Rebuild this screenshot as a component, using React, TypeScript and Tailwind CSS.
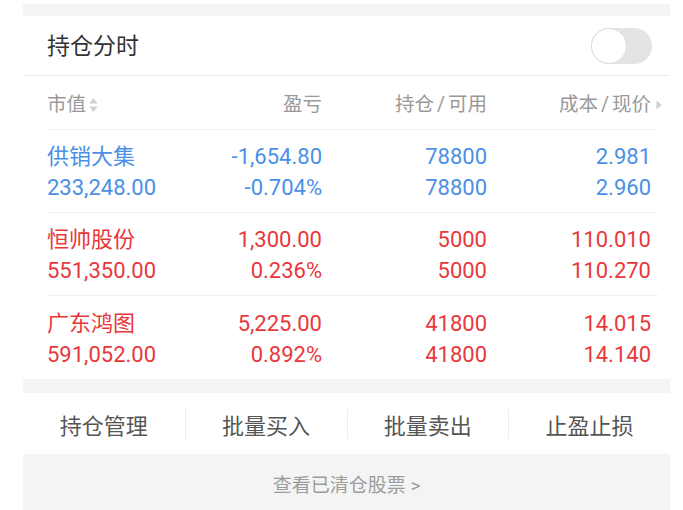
const rows = [
  { name: '供销大集', value: '233,248.00', pl: '-1,654.80', pct: '-0.704%', hold: '78800', avail: '78800', cost: '2.981', price: '2.960', up: false },
  { name: '恒帅股份', value: '551,350.00', pl: '1,300.00', pct: '0.236%', hold: '5000', avail: '5000', cost: '110.010', price: '110.270', up: true },
  { name: '广东鸿图', value: '591,052.00', pl: '5,225.00', pct: '0.892%', hold: '41800', avail: '41800', cost: '14.015', price: '14.140', up: true },
]

const actions = ['持仓管理', '批量买入', '批量卖出', '止盈止损']

function SortIcon() {
  return (
    <svg width="9" height="16" viewBox="0 0 9 16" className="ml-[3px]">
      <path d="M4.5 1 L8.5 6.5 L0.5 6.5 Z" fill="#cfcfcf" />
      <path d="M4.5 15 L8.5 9.5 L0.5 9.5 Z" fill="#cfcfcf" />
    </svg>
  )
}

export default function App() {
  return (
    <div className="min-h-[510px] bg-white pt-1 font-['Roboto','Noto_Sans_CJK_SC',sans-serif]">
      <div className="ml-[23px] w-[647px] bg-[#f4f4f4]">
        <div className="h-3" />
        <div className="bg-white">
          {/* title */}
          <div className="flex h-[60px] items-center justify-between border-b border-[#ececec] pl-6 pr-[18px]">
            <span className="pt-[3px] text-[23px] text-[#333]">持仓分时</span>
            <div className="relative h-9 w-[61px] rounded-full bg-[#e4e4e4]">
              <div className="absolute left-0 top-0 h-9 w-9 rounded-full border border-[#dcdcdc] bg-white" />
            </div>
          </div>

          {/* column heads */}
          <div className="ml-6 mr-3 flex h-[54px] items-center border-b border-[#f0f0f0] pr-[7px] pt-[5px] text-[19.5px] text-[#999]">
            <div className="flex w-[130px] items-center">
              市值
              <SortIcon />
            </div>
            <div className="w-[145px] text-right">盈亏</div>
            <div className="w-[165px] text-right">
              持仓<span className="px-[3px]">/</span>可用
            </div>
            <div className="relative w-[164px] text-right">
              成本<span className="px-[3px]">/</span>现价
              <svg width="6" height="10" viewBox="0 0 6 10" className="absolute -right-[11px] top-[10px]">
                <path d="M0.5 0.5 L5.5 5 L0.5 9.5 Z" fill="#cfcfcf" />
              </svg>
            </div>
          </div>

          {/* rows */}
          {rows.map((r, i) => (
            <div
              key={r.name}
              className={`ml-6 mr-3 flex h-[83px] flex-col justify-center pr-[7px] pt-[2px] text-[22px] leading-[31px] ${
                r.up ? 'text-[#e8383b]' : 'text-[#4a90e6]'
              } ${i < rows.length - 1 ? 'border-b border-[#f0f0f0]' : ''}`}
            >
              <div className="flex">
                <div className="w-[130px]">{r.name}</div>
                <div className="w-[145px] text-right">{r.pl}</div>
                <div className="w-[165px] text-right">{r.hold}</div>
                <div className="w-[164px] text-right">{r.cost}</div>
              </div>
              <div className="flex">
                <div className="w-[130px]">{r.value}</div>
                <div className="w-[145px] text-right">{r.pct}</div>
                <div className="w-[165px] text-right">{r.avail}</div>
                <div className="w-[164px] text-right">{r.price}</div>
              </div>
            </div>
          ))}
        </div>

        <div className="h-[14px]" />

        {/* actions */}
        <div className="grid h-[61px] grid-cols-4 items-center bg-white">
          {actions.map((a, i) => (
            <div
              key={a}
              className={`flex h-[30px] items-center justify-center pt-[5px] text-[22px] text-[#555] ${
                i > 0 ? 'border-l border-[#ededed]' : ''
              }`}
            >
              {a}
            </div>
          ))}
        </div>

        <div className="flex h-[62px] items-center justify-center pt-[3px] text-[19px] text-[#9c9c9c]">
          查看已清仓股票 &gt;
        </div>
      </div>
    </div>
  )
}
